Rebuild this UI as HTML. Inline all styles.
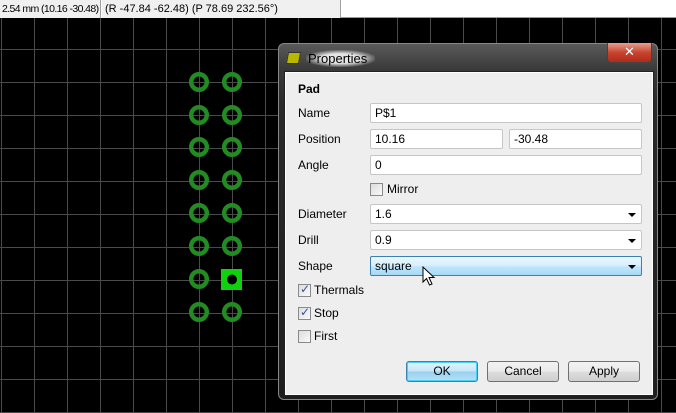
<!DOCTYPE html>
<html><head><style>
*{margin:0;padding:0;box-sizing:border-box}
body{width:676px;height:413px;overflow:hidden;background:#000;font-family:"Liberation Sans","DejaVu Sans",sans-serif;font-size:12px;color:#000;position:relative}
.abs{position:absolute}
#status{left:0;top:0;width:676px;height:18px;background:#fff;border-bottom:1px solid #999}
.seg{top:0;height:18px;background:#f0f0f0;border-right:1px solid #a0a0a0;font-size:11px;line-height:18px;padding-left:3px;color:#000;white-space:nowrap;overflow:hidden}
#grid{left:0;top:18px}
#dlg{left:278px;top:43px;width:380px;height:357px;border-radius:6px;background:linear-gradient(180deg,#5a5a5a 0px,#3a3a3a 25px,#2a2a2a 60px,#1e1e1e 100%);border:1px solid #888}
#client{left:6px;top:28px;width:368px;height:323px;background:#eeeeee;border:1px solid #fff;outline:1px solid #222}
.lbl{font-size:12px;line-height:14px}
.inp{height:20px;background:#fff;border:1px solid #c6c6c6;border-radius:2px;font-size:12px;line-height:18px;padding-left:4px}
.cb{width:13px;height:13px;border:1px solid #8a8a8a;background:linear-gradient(135deg,#dcdcdc,#fafafa)}
.arr{position:absolute;right:5px;top:8px;width:0;height:0;border-left:4px solid transparent;border-right:4px solid transparent;border-top:4px solid #000}
.btn{height:21px;border:1px solid #707070;border-radius:3px;background:linear-gradient(#f2f2f2 0,#ebebeb 50%,#dddddd 51%,#cfcfcf 100%);text-align:center;font-size:12px;line-height:19px}
</style></head><body>
<div class="abs" id="status"></div>
<div class="abs seg" style="left:0;width:101px;font-size:10.5px;letter-spacing:-0.6px;padding-left:2px">2.54 mm (10.16 -30.48)</div>
<div class="abs seg" style="left:101px;width:240px;border-left:1px solid #fff">(R -47.84 -62.48) (P 78.69 232.56°)</div>
<svg class="abs" id="grid" width="676" height="395" viewBox="0 18 676 395">
<g stroke="#4a4a4a" stroke-width="1">
<path d="M1.5 18V413M34.5 18V413M67.5 18V413M100.5 18V413M133.5 18V413M166.5 18V413M199.5 18V413M232.5 18V413M265.5 18V413M298.5 18V413M331.5 18V413M364.5 18V413M397.5 18V413M430.5 18V413M463.5 18V413M496.5 18V413M529.5 18V413M562.5 18V413M595.5 18V413M628.5 18V413M661.5 18V413"/>
<path d="M0 49.5H676M0 82.5H676M0 115.5H676M0 148.5H676M0 181.5H676M0 214.5H676M0 247.5H676M0 280.5H676M0 313.5H676M0 346.5H676M0 379.5H676M0 412.5H676"/>
</g>
<g fill="none" stroke="#228b22" stroke-width="4.5">
<circle cx="199" cy="82" r="7.8"/><circle cx="232" cy="82" r="7.8"/>
<circle cx="199" cy="115" r="7.8"/><circle cx="232" cy="115" r="7.8"/>
<circle cx="199" cy="147" r="7.8"/><circle cx="232" cy="147" r="7.8"/>
<circle cx="199" cy="180" r="7.8"/><circle cx="232" cy="180" r="7.8"/>
<circle cx="199" cy="213" r="7.8"/><circle cx="232" cy="213" r="7.8"/>
<circle cx="199" cy="246" r="7.8"/><circle cx="232" cy="246" r="7.8"/>
<circle cx="199" cy="279" r="7.8"/>
<circle cx="199" cy="312" r="7.8"/><circle cx="232" cy="312" r="7.8"/>
</g>
<rect x="221" y="269" width="21" height="21" fill="#0fd20f"/>
<circle cx="232" cy="279.5" r="5" fill="#000"/>
</svg>
<div class="abs" id="dlg">
 <div class="abs" style="left:8px;top:8px;width:13px;height:12px;background:#b8b800;border:1px solid #333;transform:skewX(-10deg)"></div>
 <div class="abs" style="left:27px;top:6px;font-size:13px;color:#000;background:radial-gradient(ellipse at center,rgba(255,255,255,.85) 40%,rgba(255,255,255,0) 75%);padding:1px 8px 1px 2px">Properties</div>
 <div class="abs" style="left:328px;top:-1px;width:45px;height:20px;border:1px solid #444;border-top:none;border-radius:0 0 4px 4px;background:linear-gradient(#e8a090,#c8442f 50%,#b02a18);color:#fff;text-align:center;font-weight:bold;font-size:13px;line-height:18px">✕</div>
 <div class="abs" id="client">
  <div class="abs lbl" style="left:12px;top:9px;font-weight:bold">Pad</div>
  <div class="abs lbl" style="left:12px;top:33px">Name</div>
  <div class="abs inp" style="left:84px;top:30px;width:272px">P$1</div>
  <div class="abs lbl" style="left:12px;top:59px">Position</div>
  <div class="abs inp" style="left:84px;top:56px;width:133px">10.16</div>
  <div class="abs inp" style="left:223px;top:56px;width:133px">-30.48</div>
  <div class="abs lbl" style="left:12px;top:85px">Angle</div>
  <div class="abs inp" style="left:84px;top:82px;width:272px">0</div>
  <div class="abs cb" style="left:84px;top:110px"></div>
  <div class="abs lbl" style="left:101px;top:109px">Mirror</div>
  <div class="abs lbl" style="left:12px;top:134px">Diameter</div>
  <div class="abs inp" style="left:84px;top:131px;width:272px">1.6<div class="arr"></div></div>
  <div class="abs lbl" style="left:12px;top:160px">Drill</div>
  <div class="abs inp" style="left:84px;top:157px;width:272px">0.9<div class="arr"></div></div>
  <div class="abs lbl" style="left:12px;top:186px">Shape</div>
  <div class="abs inp" style="left:84px;top:183px;width:272px;border-color:#3c7fb1;background:linear-gradient(#eaf6fd,#d9f0fc 45%,#bee6fd 55%,#a7d9f5)">square<div class="arr"></div></div>
  <svg class="abs" style="left:136px;top:193px" width="14" height="20" viewBox="0 0 14 20"><path d="M1 1V16L4.5 12.5L7.5 19L10 18L7 11.5H12Z" fill="#fff" stroke="#000" stroke-width="1"/></svg>
  <div class="abs cb" style="left:12px;top:211px"></div><div class="abs" style="left:14px;top:209px;color:#3553a0;font-size:12px">✓</div>
  <div class="abs lbl" style="left:28px;top:210px">Thermals</div>
  <div class="abs cb" style="left:12px;top:234px"></div><div class="abs" style="left:14px;top:232px;color:#3553a0;font-size:12px">✓</div>
  <div class="abs lbl" style="left:28px;top:233px">Stop</div>
  <div class="abs cb" style="left:12px;top:257px"></div>
  <div class="abs lbl" style="left:28px;top:256px">First</div>
  <div class="abs btn" style="left:120px;top:288px;width:72px;border-color:#3c7fb1;box-shadow:inset 0 0 0 1px #48d0f8;background:linear-gradient(#e5f4fc,#c4e5f6 50%,#98d1ef 51%,#b8e0f4)">OK</div>
  <div class="abs btn" style="left:201px;top:288px;width:72px">Cancel</div>
  <div class="abs btn" style="left:282px;top:288px;width:72px">Apply</div>
 </div>
</div>
</body></html>
